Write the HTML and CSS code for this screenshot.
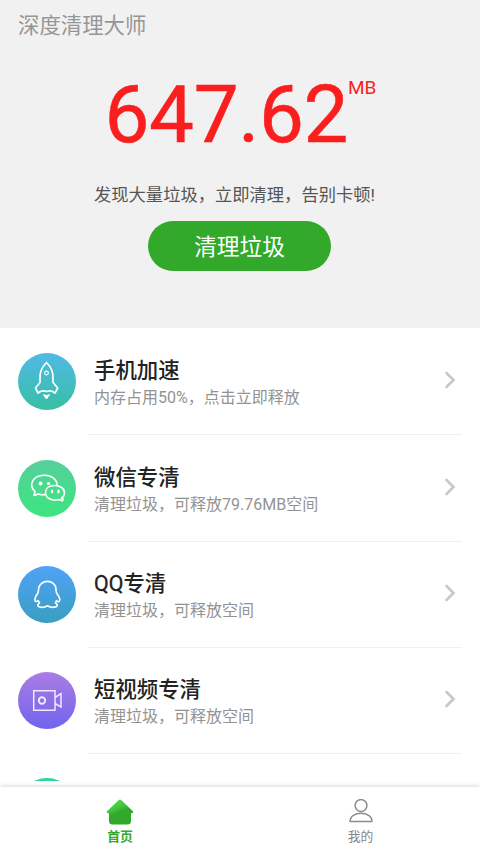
FILE: index.html
```html
<!DOCTYPE html>
<html lang="zh-CN">
<head>
<meta charset="utf-8">
<title>深度清理大师</title>
<link rel="stylesheet" href="styles.css">
</head>
<body>
<div class="app">
  <header class="hero">
    <h1 class="brand">深度清理大师</h1>
    <div class="amount"><span class="number">647.62</span><span class="unit">MB</span></div>
    <p class="message">发现大量垃圾，立即清理，告别卡顿!</p>
    <button class="clean">清理垃圾</button>
  </header>
  <main class="list">
    <section class="row">
      <div class="badge boost"><svg viewBox="0 0 58 57" fill="none" stroke="#fff" stroke-width="1.700" stroke-linejoin="round"><path d="M28.500 9.500C24 14 21.500 19.500 22 25.500V29.500L17.500 35L20 40Q24 36.500 28.500 38.500Q33 36.500 37 40L39.700 35L35 29.500V25.500C35.500 19.500 33 14 28.500 9.500Z"/><circle cx="28.500" cy="20" r="1.900" stroke-width="1.100"/><path d="M25.500 41.700L28.500 42.600L31.500 41.700L28.500 46Z" fill="#fff" stroke-width="1"/></svg></div>
      <div class="body"><div class="copy"><h2>手机加速</h2><p>内存占用50%，点击立即释放</p></div><svg class="chevron" viewBox="0 0 12 20"><path d="M2.500 3L9.500 10L2.500 17"/></svg></div>
    </section>
    <section class="row">
      <div class="badge wechat"><svg viewBox="0 0 58 57" fill="none" stroke="#fff" stroke-width="1.600" stroke-linejoin="round"><path d="M27.500 34.500Q23.500 35.300 20.500 34L16 35.500L17 31.500C10.500 25.500 14 15.500 26 15.300C34 15 39 19.500 39.300 25.500"/><path d="M45 38.500L44.500 40.700L40.500 39.500C34 41.500 27.500 38 27.500 32.500C27.500 28 31.500 25.500 36.500 25.500C42 25.500 46.500 28.500 46.500 32.700Q46.500 36 43.500 38.200Z"/><g fill="#fff" stroke="none"><circle cx="22.500" cy="23.500" r="1.900"/><circle cx="30.500" cy="23.500" r="1.600"/><ellipse cx="34" cy="31.500" rx="1.200" ry="1.900"/><ellipse cx="40.500" cy="31.500" rx="1.200" ry="1.900"/></g></svg></div>
      <div class="body"><div class="copy"><h2>微信专清</h2><p>清理垃圾，可释放79.76MB空间</p></div><svg class="chevron" viewBox="0 0 12 20"><path d="M2.500 3L9.500 10L2.500 17"/></svg></div>
    </section>
    <section class="row">
      <div class="badge qq"><svg viewBox="0 0 58 57" fill="none" stroke="#fff" stroke-width="1.600" stroke-linejoin="round"><path d="M20.500 24C20.500 12.500 38.500 12.500 38 24Q38 26.500 39.500 28.500Q42.500 32.500 41.500 35Q40.500 36.500 38.500 34.500L37.500 37Q40.500 39 38.500 40.500Q34 42.500 29.500 39.700Q25 42.500 20.500 40.500Q18.500 39 21.500 37L20 34.500Q17.500 36.500 17 34.500Q16.500 32 19 28.500Q20.500 26.500 20.500 24Z"/></svg></div>
      <div class="body"><div class="copy"><h2><span class="latin">QQ</span>专清</h2><p>清理垃圾，可释放空间</p></div><svg class="chevron" viewBox="0 0 12 20"><path d="M2.500 3L9.500 10L2.500 17"/></svg></div>
    </section>
    <section class="row">
      <div class="badge video"><svg viewBox="0 0 58 57" fill="none" stroke="#f0e9ff" stroke-width="1.500"><path d="M15.700 18.700H37V38.300H15.700ZM37 25.500L43 21.700V35L37 31.500"/><circle cx="24" cy="28.500" r="3.200" stroke-width="1.900"/></svg></div>
      <div class="body"><div class="copy"><h2>短视频专清</h2><p>清理垃圾，可释放空间</p></div><svg class="chevron" viewBox="0 0 12 20"><path d="M2.500 3L9.500 10L2.500 17"/></svg></div>
    </section>
    <section class="row">
      <div class="badge extra"></div>
    </section>
  </main>
  <nav class="tabs">
    <a class="tab active"><svg viewBox="0 0 28 28"><defs><linearGradient id="roof" x1="0.200" y1="0" x2="0.500" y2="0.700"><stop offset="0" stop-color="#56dc48"/><stop offset="0.500" stop-color="#44c63b"/><stop offset="0.750" stop-color="#32a92b"/></linearGradient></defs><path fill="url(#roof)" d="M12.800 1Q14 0 15.200 1L27.200 12.500Q27.800 14.500 25 14.300V22Q25 25.500 21.500 25.500H6.500Q3 25.500 3 22V14.300Q0.200 14.500 0.800 12.500Z"/></svg><span>首页</span></a>
    <a class="tab"><svg class="person" viewBox="0 0 28 28" fill="none" stroke="#8c8c8c" stroke-width="1.500"><circle cx="14" cy="6.500" r="5.900"/><path d="M3 22.500C3 11.500 25 11.500 25 22.500Z" stroke-linejoin="round"/></svg><span>我的</span></a>
  </nav>
</div>
</body>
</html>
```
FILE: styles.css
```css
* { box-sizing: border-box; }

body {
  margin: 0;
  font-family: Roboto, "Noto Sans CJK SC", sans-serif;
  background: #fff;
}

h1, h2, p { margin: 0; font-weight: 400; }

.app {
  display: flex;
  flex-direction: column;
  height: 853px;
  overflow: hidden;
}

.hero {
  display: flex;
  flex-direction: column;
  align-items: center;
  flex: 0 0 328px;
  background: #f1f1f1;
}

.brand {
  align-self: flex-start;
  margin: 10px 0 0 18px;
  font-size: 21.4px;
  line-height: 32px;
  color: #969696;
}

.amount {
  display: flex;
  align-items: flex-start;
  height: 94px;
  margin: 26px 0 0 1px;
  color: #fa1e1e;
}

.number { font-size: 80px; line-height: 94px; letter-spacing: -0.4px; -webkit-text-stroke: 0.5px #fa1e1e; }
.unit { margin-top: 8px; font-size: 19px; line-height: 24px; }

.message {
  margin: 20px 0 0 -11px;
  font-size: 17.3px;
  line-height: 26px;
  color: #555;
}

.clean {
  width: 183px;
  height: 50px;
  margin: 13px 1px 0 0;
  padding: 3px 0 0;
  border: 0;
  border-radius: 25px;
  background: #32a92b;
  color: #fff;
  font: inherit;
  font-size: 22.7px;
  line-height: 47px;
}

.list { flex: 0 0 453px; overflow: hidden; }

.row {
  display: flex;
  align-items: flex-start;
  height: 106.3px;
  padding: 0 18px;
}

.badge {
  flex: 0 0 58px;
  height: 57px;
  margin-top: 25.3px;
  border-radius: 50%;
}

.badge svg { display: block; width: 58px; height: 57px; }
.boost { background: linear-gradient(#50b9e6, #38bfa4); }
.wechat { background: linear-gradient(#55d09c, #3de57f); }
.qq { background: linear-gradient(#50a2f8, #389fc0); }
.video { background: linear-gradient(#aa7de3, #7164ee); }
.extra { background: #28d894; }

.body {
  display: flex;
  flex: 1;
  align-items: flex-start;
  justify-content: space-between;
  height: 107.3px;
  margin-left: 12px;
  padding: 28.3px 6px 0 6px;
  border-bottom: 1px solid #f0f0f0;
}

.copy h2 {
  font-size: 21.4px;
  font-weight: 500;
  line-height: 30px;
  color: #222;
}

.latin { font-weight: 400; -webkit-text-stroke: 0.3px #222; }

.copy p {
  font-size: 16px;
  line-height: 24px;
  color: #939393;
}

.chevron {
  width: 12px;
  height: 20px;
  margin-top: 14px;
  fill: none;
  stroke: #c8c8c8;
  stroke-width: 2.7;
  stroke-linecap: round;
}

.tabs {
  display: flex;
  flex: 0 0 66px;
  margin-top: auto;
  background: #fff;
  box-shadow: 0 -1px 4px rgba(0, 0, 0, 0.16);
}

.tab {
  display: flex;
  flex: 1;
  flex-direction: column;
  align-items: center;
  padding-top: 12px;
  font-size: 12.8px;
  line-height: 18px;
  color: #858585;
}

.tab svg { width: 28px; height: 28px; margin-bottom: 1px; }
.tab .person { margin-left: 2px; }
.tab .person + span { margin-left: 1px; }
.active { color: #32a92b; font-weight: 700; }
```
